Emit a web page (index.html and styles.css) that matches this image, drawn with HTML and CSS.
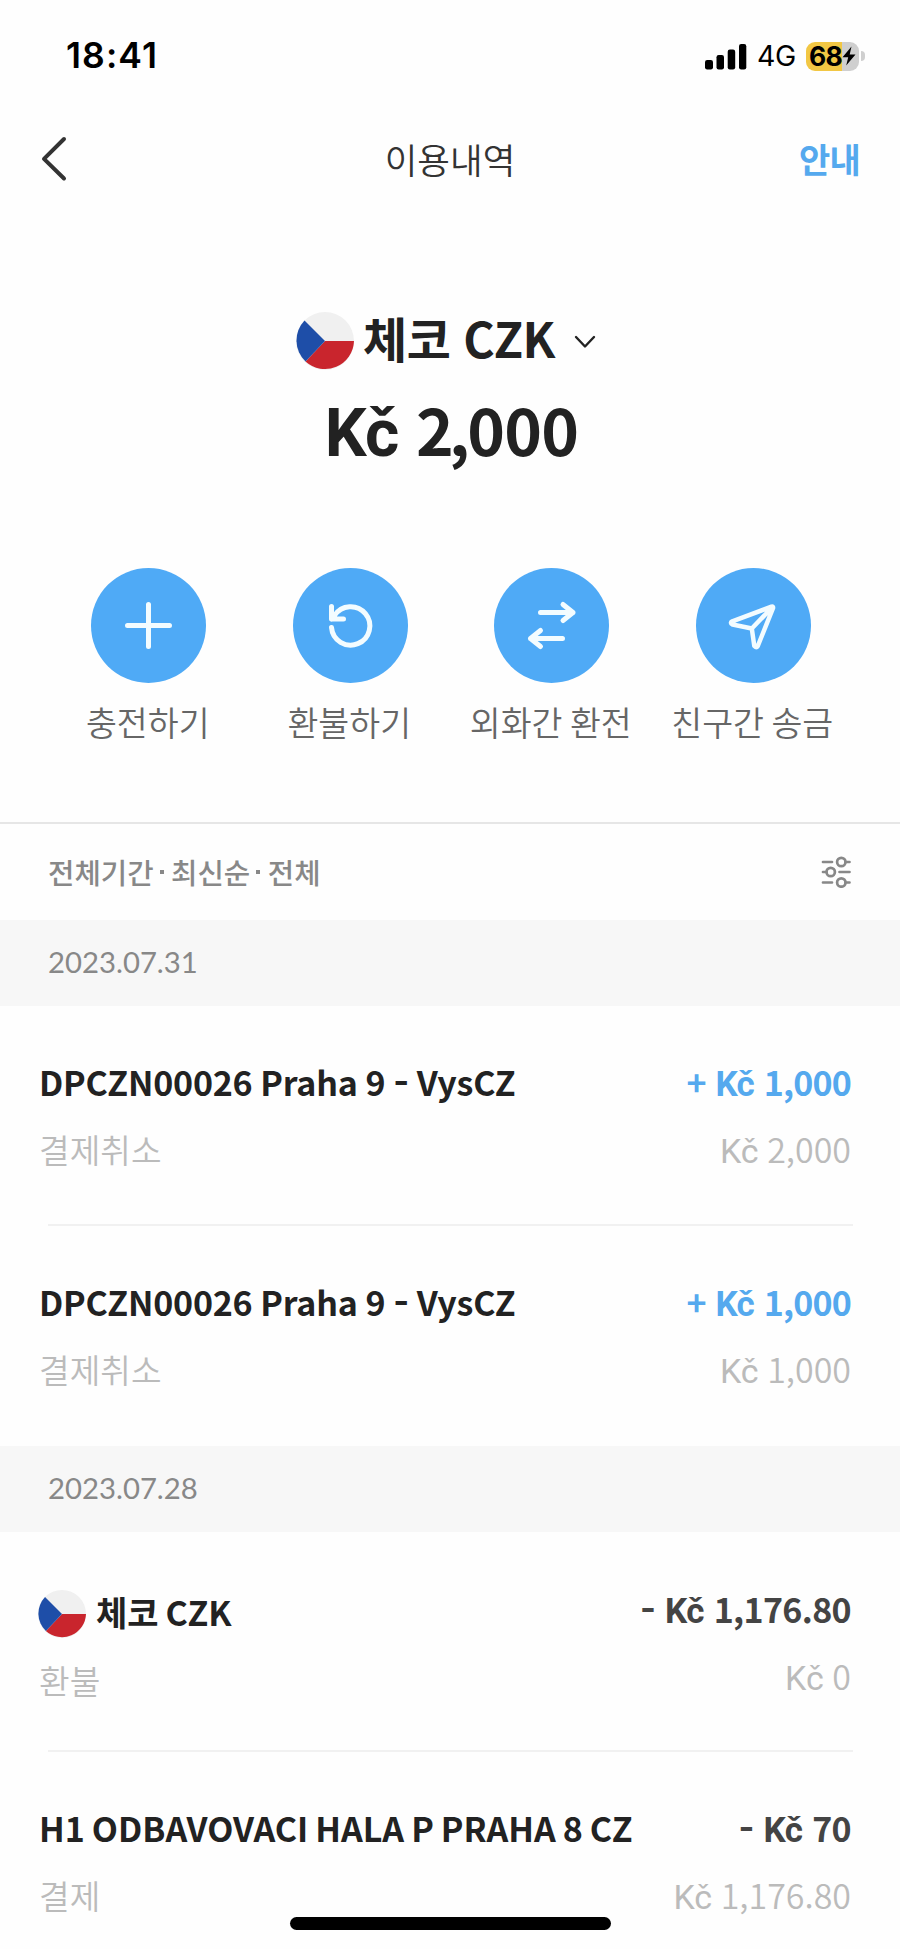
FILE: index.html
```
<!DOCTYPE html>
<html lang="ko">
<head>
<meta charset="utf-8">
<title>이용내역</title>
<link rel="stylesheet" href="styles.css">
</head>
<body>
<svg class="defs" width="0" height="0" aria-hidden="true">
  <symbol id="flag-cz" viewBox="0 0 58 58">
    <circle cx="29" cy="29" r="29" fill="#f0f0f0"/>
    <path d="M29 29H58A29 29 0 0 1 9.500 49.500Z" fill="#c9252d"/>
    <path d="M29 29L8.500 8.500A29 29 0 0 0 9.500 49.500Z" fill="#1e4ea8"/>
  </symbol>
</svg>
<div class="screen">
  <header class="status">
    <span class="clock">18:41</span>
    <div class="status-right">
      <svg class="signal" width="42" height="27" viewBox="0 0 42 27">
        <rect x="0" y="17" width="8" height="9.500" rx="2.200"/>
        <rect x="11.500" y="12" width="7.500" height="14.500" rx="2.200"/>
        <rect x="22.700" y="6.500" width="7.500" height="20" rx="2.200"/>
        <rect x="34" y="1" width="7.300" height="25.500" rx="2.200"/>
      </svg>
      <span class="network">4G</span>
      <div class="battery">
        <span class="level">68</span>
        <svg class="bolt" width="14" height="20" viewBox="0 0 14 20"><path d="M9.500 .5L.5 11.300H6.200L4.200 19.500L13.500 8.600H7.700Z"/></svg>
      </div>
      <span class="battery-cap"></span>
    </div>
  </header>
  <nav class="navbar">
    <svg class="back" width="26" height="46" viewBox="0 0 26 46"><path d="M23 3L3 22.800L23 42.500"/></svg>
    <h1 class="nav-title">이용내역</h1>
    <a class="guide">안내</a>
  </nav>
  <section class="wallet">
    <div class="currency">
      <svg class="flag-lg"><use href="#flag-cz"/></svg>
      <span class="currency-name">체코 CZK</span>
      <svg class="chevron" width="22" height="14" viewBox="0 0 22 14"><path d="M2 2L11 11.500L20 2"/></svg>
    </div>
    <div class="balance"><span class="unit">Kč</span> 2<span class="comma">,</span>000</div>
    <div class="actions">
      <div class="action">
        <svg class="action-icon" viewBox="0 0 115 115"><circle cx="57.500" cy="57.500" r="57.500"/><path class="line-w5" d="M57.500 36.500V78.500M36.500 57.500H78.500"/></svg>
        <span class="action-label">충전하기</span>
      </div>
      <div class="action">
        <svg class="action-icon" viewBox="0 0 115 115"><circle cx="57.500" cy="57.500" r="57.500"/><path class="line-w5" d="M38.500 59.500A19.200 19.200 0 1 0 41.500 47.500L38.500 51M38.500 38.500V51H50.500"/></svg>
        <span class="action-label">환불하기</span>
      </div>
      <div class="action">
        <svg class="action-icon" viewBox="0 0 115 115"><circle cx="57.500" cy="57.500" r="57.500"/><path class="line-w5" d="M46.500 44.500H79M69 36.500L79 44.500L69 52.500M68.500 70.500H36.500M46.500 62.500L36.500 70.500L46.500 78.500"/></svg>
        <span class="action-label">외화간 환전</span>
      </div>
      <div class="action">
        <svg class="action-icon" viewBox="0 0 115 115"><circle cx="57.500" cy="57.500" r="57.500"/><path class="line-w4" d="M75.500 38.700Q77.500 38.200 77 40.200L61.800 78Q60.200 80.500 58.300 78L55.800 60.500L36.500 56.500Q33.500 54.900 36.300 53.300ZM76 39.500L55.800 60.500"/></svg>
        <span class="action-label">친구간 송금</span>
      </div>
    </div>
  </section>
  <section class="filter">
    <span class="filter-text">전체기간<i class="dot"></i>최신순<i class="dot"></i>전체</span>
    <svg class="filter-icon" width="30" height="32" viewBox="0 0 30 32">
      <path d="M2 6H11M24.500 6H28.500M2 16H5.500M18.500 16H28.500M2 26.500H11M24.500 26.500H28.500"/>
      <circle cx="20.300" cy="6" r="4.200"/><circle cx="9.700" cy="16" r="4.200"/><circle cx="20.300" cy="26.500" r="4.200"/>
    </svg>
  </section>
  <h2 class="date">2023.07.31</h2>
  <article class="entry">
    <div class="detail"><div class="name praha">DPCZN00026 Praha 9 <span class="dash">-</span> VysCZ</div><div class="kind">결제취소</div></div>
    <div class="sums"><div class="amount plus">+ <span class="unit">Kč</span> 1,000</div><div class="after"><span class="unit">Kč</span> 2,000</div></div>
  </article>
  <hr class="rule">
  <article class="entry last">
    <div class="detail"><div class="name praha">DPCZN00026 Praha 9 <span class="dash">-</span> VysCZ</div><div class="kind">결제취소</div></div>
    <div class="sums"><div class="amount plus">+ <span class="unit">Kč</span> 1,000</div><div class="after"><span class="unit">Kč</span> 1,000</div></div>
  </article>
  <h2 class="date">2023.07.28</h2>
  <article class="entry refund">
    <div class="detail"><div class="name with-flag"><svg class="flag-sm"><use href="#flag-cz"/></svg><span class="flag-name">체코 CZK</span></div><div class="kind">환불</div></div>
    <div class="sums"><div class="amount"><span class="dash">-</span> <span class="unit">Kč</span> 1,176.80</div><div class="after"><span class="unit">Kč</span> 0</div></div>
  </article>
  <hr class="rule">
  <article class="entry">
    <div class="detail"><div class="name">H1 ODBAVOVACI HALA P PRAHA 8 CZ</div><div class="kind">결제</div></div>
    <div class="sums"><div class="amount"><span class="dash">-</span> <span class="unit">Kč</span> 70</div><div class="after"><span class="unit">Kč</span> 1,176.80</div></div>
  </article>
  <div class="home-bar"></div>
</div>
</body>
</html>
```
FILE: styles.css
```
* { box-sizing: border-box; margin: 0; padding: 0; }
body { background: #fefefe; font-family: "Noto Sans CJK KR", sans-serif; color: #222; }
.defs { position: absolute; }
.screen { position: relative; width: 900px; height: 1949px; overflow: hidden; display: flex; flex-direction: column; background: #fefefe; }
.screen > * { flex-shrink: 0; }

.status { height: 110px; padding: 36px 35px 0 66px; display: flex; justify-content: space-between; align-items: flex-start; font-family: Inter, sans-serif; color: #000; }
.clock { font-size: 35.500px; line-height: 40px; font-weight: 600; letter-spacing: 1.100px; }
.status-right { display: flex; align-items: center; height: 40px; }
.signal { margin-right: 10px; }
.network { width: 40px; font-size: 28.500px; line-height: 40px; letter-spacing: -.5px; }
.battery { width: 53px; height: 29px; margin-left: 9px; border-radius: 9px; background: linear-gradient(90deg, #f2c744 68%, #cfcfcf 68%); display: flex; align-items: center; padding-left: 3px; }
.level { font-size: 26.500px; line-height: 29px; font-weight: 700; letter-spacing: -.8px; }
.bolt { flex-shrink: 0; }
.battery-cap { width: 4px; height: 10px; margin-left: 2px; border-radius: 0 5px 5px 0; background: #cfcfcf; }

.navbar { height: 100px; padding: 24px 40px 0; display: grid; grid-template-columns: 1fr auto 1fr; align-items: start; }
.back { margin: 2px 0 0 1px; fill: none; stroke: #333; stroke-width: 4; stroke-linecap: round; stroke-linejoin: round; }
.nav-title { font-size: 35.500px; line-height: 50px; font-weight: 350; color: #333; }
.guide { justify-self: end; font-size: 34px; line-height: 50px; font-weight: 700; letter-spacing: -.8px; color: #55a9ee; }

.wallet { height: 614px; border-bottom: 2px solid #e6e6e6; padding: 101px 48px 0; }
.currency { height: 60px; display: flex; align-items: center; padding-left: 248px; }
.flag-lg { width: 58px; height: 58px; }
.currency-name { margin: 0 0 9px 9px; font-size: 48px; line-height: 58px; font-weight: 700; letter-spacing: -.5px; }
.chevron { margin: 2px 0 0 19px; fill: none; stroke: #222; stroke-width: 2.4; stroke-linecap: round; stroke-linejoin: round; }
.balance { margin-top: 17px; padding-left: 3px; font-size: 64px; line-height: 80px; font-weight: 700; text-align: center; letter-spacing: -.7px; }
.unit { font-family: Roboto, "Liberation Sans", sans-serif; font-size: 1.030em; line-height: 0; }
.comma { margin: 0 -2px 0 -4px; }
.actions { margin-top: 100px; display: grid; grid-template-columns: repeat(4, 201.500px); }
.action { display: flex; flex-direction: column; align-items: center; }
.action-icon { width: 115px; height: 115px; fill: none; stroke: #f3fcff; stroke-linecap: round; stroke-linejoin: round; }
.action-icon circle { fill: #4faaf6; stroke: none; }
.line-w5 { stroke-width: 5; }
.line-w4 { stroke-width: 4.500; }
.action-label { margin-top: 17px; padding-right: 2px; font-size: 33.600px; line-height: 44px; font-weight: 350; color: #666; white-space: nowrap; word-spacing: -2px; }

.filter { height: 96px; padding: 0 49px 0 48px; display: flex; align-items: center; justify-content: space-between; }
.filter-text { font-size: 28.700px; line-height: 40px; font-weight: 500; color: #888; display: flex; align-items: center; }
.dot { width: 4px; height: 4px; margin: 0 7.500px 0 6px; background: #888; }
.filter-icon { fill: none; stroke: #888; stroke-width: 2.700; stroke-linecap: round; }

.date { height: 86px; padding-left: 48px; background: #f7f7f7; font-family: Lato, sans-serif; font-size: 29.300px; line-height: 84px; font-weight: 400; color: #888; }
.entry { height: 218px; padding: 56px 49px 0 39px; display: flex; justify-content: space-between; white-space: nowrap; }
.entry.last { height: 220px; }
.name, .amount { font-size: 34px; line-height: 40px; font-weight: 700; word-spacing: -2.500px; }
.name.praha { letter-spacing: -.2px; word-spacing: -1.500px; }
.dash { font-family: Inter, sans-serif; line-height: 0; vertical-align: 3px; }
.amount { color: #444; letter-spacing: -.65px; word-spacing: 1px; }
.amount.plus { color: #55a9ee; letter-spacing: -.8px; }
.kind, .after { margin-top: 27px; line-height: 40px; color: #bbb; }
.kind { font-size: 33.300px; font-weight: 350; }
.after { font-size: 34px; font-weight: 350; word-spacing: -1px; }
.after .unit { font-weight: 400; font-size: 1em; }
.sums { text-align: right; }
.rule { height: 2px; margin: 0 47px 0 48px; border: 0; background: #f1f1f1; }
.with-flag { margin: 2px 0 0 -1px; display: flex; align-items: center; gap: 10px; }
.flag-sm { width: 48px; height: 48px; }
.flag-name { margin-bottom: 5px; }
.refund .amount { margin-top: 1px; }
.refund .kind { margin-top: 22px; }
.home-bar { position: absolute; left: 290px; top: 1917px; width: 321px; height: 13px; border-radius: 7px; background: #000; }
```
